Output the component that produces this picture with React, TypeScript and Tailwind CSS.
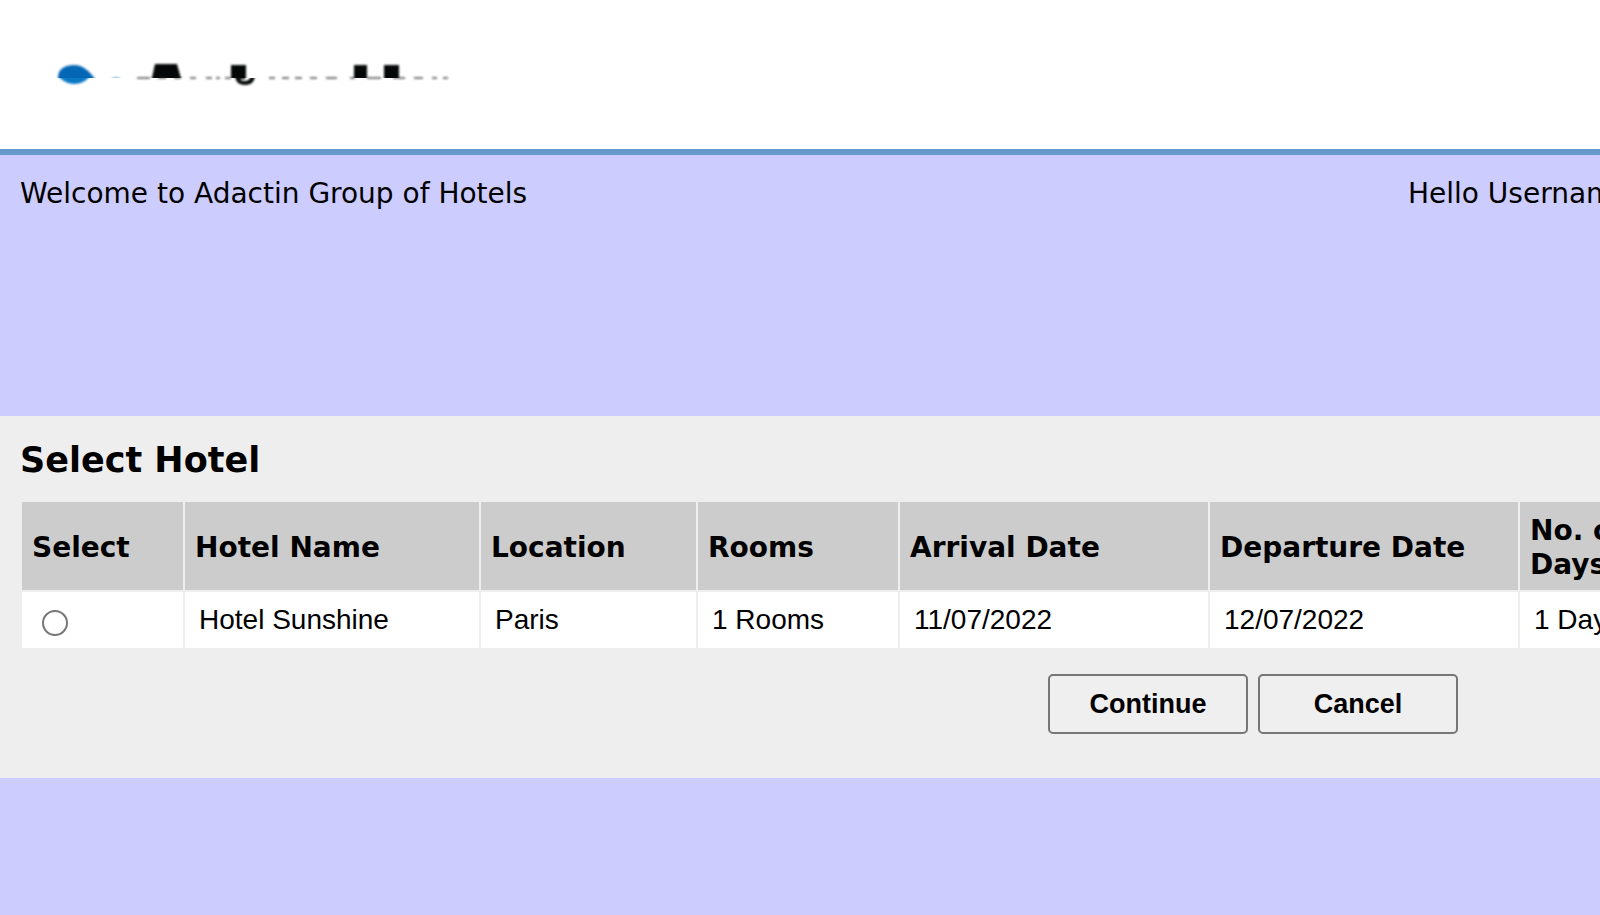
const columns = [
  { label: "Select", width: "w-[161px]" },
  { label: "Hotel Name", width: "w-[294px]" },
  { label: "Location", width: "w-[215px]" },
  { label: "Rooms", width: "w-[200px]" },
  { label: "Arrival Date", width: "w-[308px]" },
  { label: "Departure Date", width: "w-[308px]" },
  { label: "No. of Days", width: "" },
];

const hotel = ["Hotel Sunshine", "Paris", "1 Rooms", "11/07/2022", "12/07/2022", "1 Days"];

function Logo() {
  return (
    <svg width="410" height="30" viewBox="50 58 410 30" role="img" aria-label="Adactin">
      <defs>
        <filter id="soft" filterUnits="userSpaceOnUse" x="40" y="50" width="430" height="50" colorInterpolationFilters="sRGB">
          <feGaussianBlur stdDeviation="1.1" />
        </filter>
        <clipPath id="upper">
          <rect x="50" y="58" width="410" height="20" />
        </clipPath>
        <clipPath id="lower">
          <rect x="50" y="78" width="410" height="10" />
        </clipPath>
      </defs>
      <g clipPath="url(#upper)">
        <g filter="url(#soft)">
          <path d="M58 82V77C58 69 65 65 74 65C83 65 90 71 97 82Z" fill="#0467b6" />
          <path d="M110 80Q116 75 122 80Z" fill="#2f8bca" />
          <path d="M155 64H177L182 82H151Z" fill="#040707" />
          <path d="M231 65H246V82H231Z" fill="#040707" />
          <path d="M354 65H367V82H354Z" fill="#040707" />
          <path d="M384 65H399V82H384Z" fill="#040707" />
        </g>
      </g>
      <g clipPath="url(#lower)">
        <g filter="url(#soft)">
          <path d="M59 72H89V77C86 81 81 84 74 84C68 84 63 81 59 77Z" fill="#0a78c4" />
          <path d="M237 74C237 81 240 83 245 83C250 83 253 80 253 74" fill="none" stroke="#040707" strokeWidth="4" />
          <path d="M237 76V79H245V76Z" fill="#040707" />
        </g>
      </g>
      <path
        d="M137 78H150M158 78H166M174 78H181M190 78H196M206 78H212M216 78H220M225 78H231M269 78H275M282 78H289M295 78H302M310 78H317M326 78H337M350 78H355M367 78H381M393 78H405M414 78H423M432 78H437M443 78H448"
        stroke="#222"
        strokeWidth="2"
        opacity="0.6"
        filter="url(#soft)"
      />
    </svg>
  );
}

export default function App() {
  return (
    <div className="min-h-screen overflow-x-hidden bg-[#ccccff] font-['DejaVu_Sans',sans-serif] text-[28px] text-black">
      <div className="min-w-[1660px]">
        <header className="border-b-6 border-[#6699cc] bg-white px-[50px] pt-[58px] pb-[61px]">
          <div className="flex">
            <Logo />
          </div>
        </header>
        <div className="flex h-[261px] justify-between px-5 pt-[21px] leading-9">
          <p>Welcome to Adactin Group of Hotels</p>
          <p className="w-[232px] whitespace-nowrap">Hello Username!</p>
        </div>
        <main className="bg-[#eeeeee] px-5 pt-5 pb-11">
          <h1 className="mb-4 text-[35px] leading-12 font-bold">Select Hotel</h1>
          <table className="w-full table-fixed border-separate border-spacing-[2px] text-left">
            <thead>
              <tr>
                {columns.map((c) => (
                  <th key={c.label} scope="col" className={`${c.width} h-[88px] bg-[#cccccc] px-[10px] pt-[3px] pb-0 align-middle leading-[34px] font-bold`}>
                    {c.label}
                  </th>
                ))}
              </tr>
            </thead>
            <tbody className="font-['Liberation_Sans',sans-serif]">
              <tr>
                <td className="h-14 bg-white pt-[6px] pl-5">
                  <input
                    type="radio"
                    name="hotel"
                    aria-label="Select Hotel Sunshine"
                    className="block size-[26px] appearance-none rounded-full border-2 border-[#767676] bg-white checked:border-8 checked:border-[#0075ff]"
                  />
                </td>
                {hotel.map((value) => (
                  <td key={value} className="bg-white px-[14px]">{value}</td>
                ))}
              </tr>
            </tbody>
          </table>
          <div className="mt-6 flex justify-end gap-[10px] pr-[182px] font-['Liberation_Sans',sans-serif]">
            <button type="button" className="h-15 w-[200px] rounded-[5px] border-2 border-[#767676] bg-[#efefef] text-[27px] font-bold">
              Continue
            </button>
            <button type="button" className="h-15 w-[200px] rounded-[5px] border-2 border-[#767676] bg-[#efefef] text-[27px] font-bold">
              Cancel
            </button>
          </div>
        </main>
      </div>
    </div>
  );
}
